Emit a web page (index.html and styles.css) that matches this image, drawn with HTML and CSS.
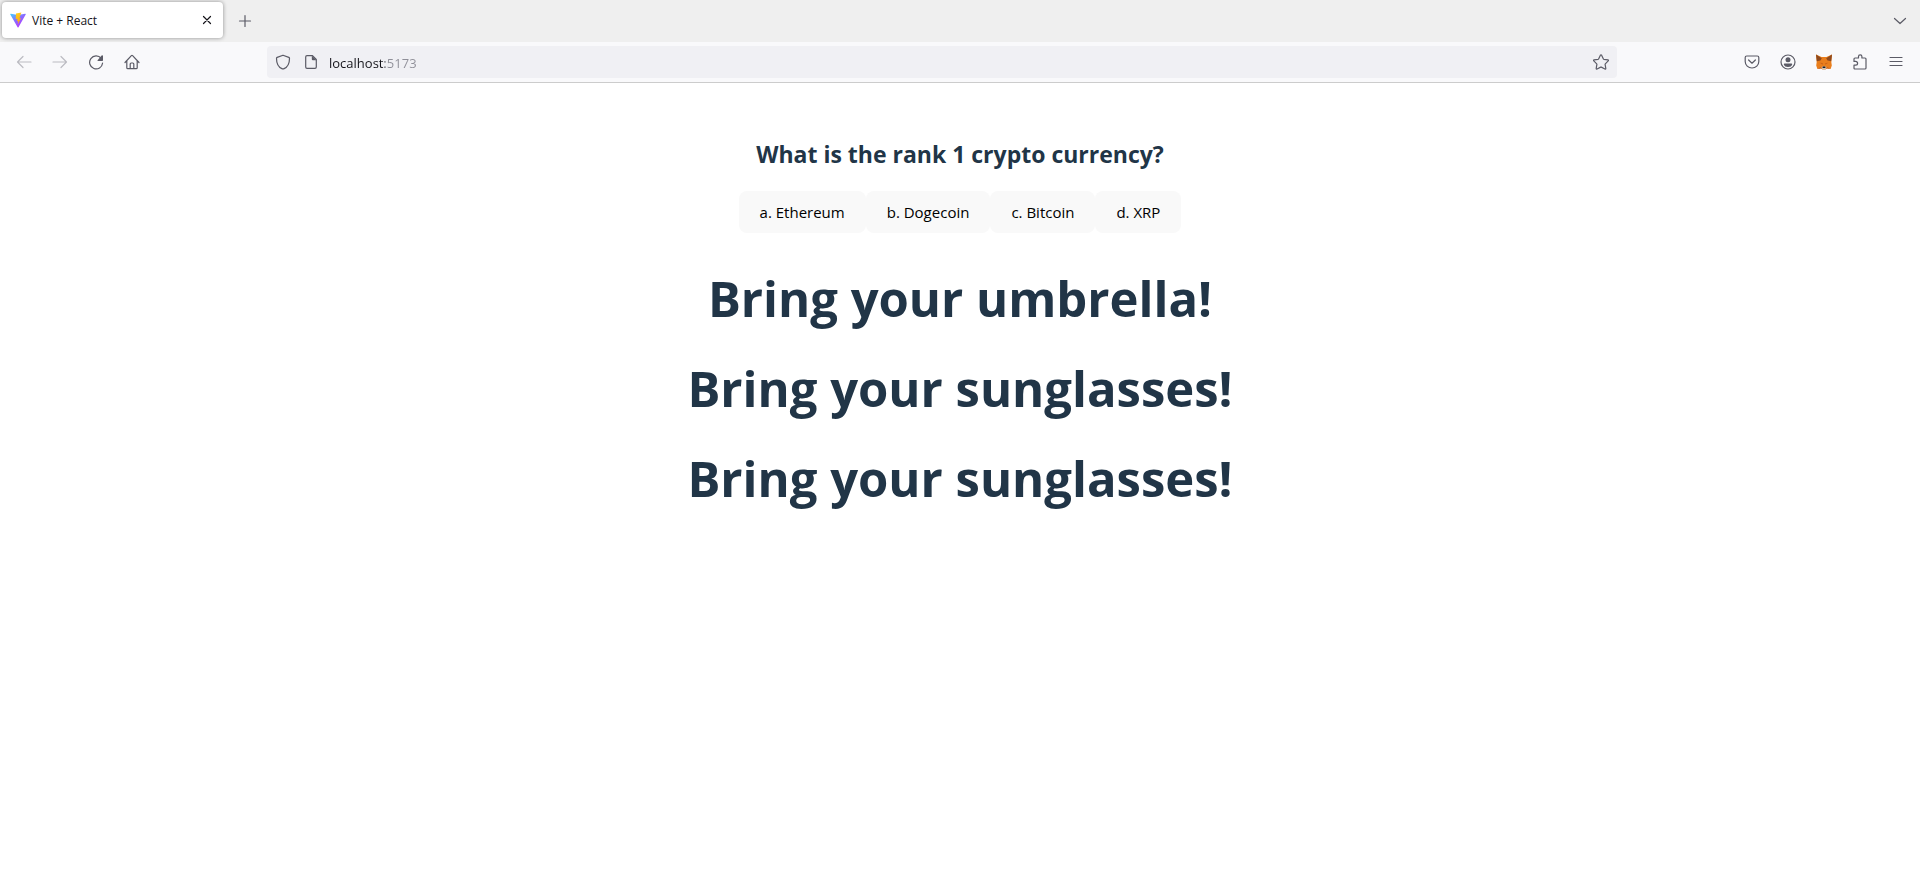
FILE: index.html
```html
<!DOCTYPE html>
<html lang="en">
<head>
<meta charset="utf-8">
<meta name="viewport" content="width=device-width, initial-scale=1">
<title>Vite + React</title>
<link rel="stylesheet" href="styles.css">
</head>
<body>
<header class="chrome">
  <div class="tabbar">
    <div class="tab">
      <svg class="favicon" viewBox="0 0 32 32" aria-hidden="true">
        <defs>
          <linearGradient id="tri" x1="0" y1="0" x2=".7" y2="1"><stop offset="0" stop-color="#41d1ff"/><stop offset=".5" stop-color="#8a6bff"/><stop offset="1" stop-color="#bd34fe"/></linearGradient>
          <linearGradient id="bolt" x1=".4" y1="0" x2=".6" y2="1"><stop offset="0" stop-color="#ffcf25"/><stop offset="1" stop-color="#ffa800"/></linearGradient>
        </defs>
        <path fill="url(#tri)" d="M31.4 5 17 30.6a1 1 0 0 1-1.8 0L.6 5a1 1 0 0 1 1.1-1.5L16 6l14.300-2.500A1 1 0 0 1 31.400 5z"/>
        <path fill="url(#bolt)" d="M22.700 1 12 3.100l-.6 11.200 3.600-.8-.9 5.200 2.500-.8-1 6.500 6.500-12-3.400.6z"/>
      </svg>
      <span class="tab-title">Vite + React</span>
      <button class="tab-close" aria-label="Close tab"><svg viewBox="0 0 16 16"><path d="m4.500 4.500 7 7M11.500 4.500l-7 7"/></svg></button>
    </div>
    <button class="tool" aria-label="New tab"><svg viewBox="0 0 16 16"><path d="M8 2.500v11M2.500 8h11"/></svg></button>
    <button class="tool all-tabs" aria-label="List all tabs"><svg viewBox="0 0 16 16"><path d="m2.500 5.500 5.500 5 5.500-5"/></svg></button>
  </div>
  <nav class="toolbar">
    <button class="tool" aria-label="Back" disabled><svg viewBox="0 0 16 16"><path d="M15 8H1.500M7 2.500 1.500 8 7 13.500"/></svg></button>
    <button class="tool" aria-label="Forward" disabled><svg viewBox="0 0 16 16"><path d="M1 8h13.500M9 2.500 14.500 8 9 13.500"/></svg></button>
    <button class="tool" aria-label="Reload"><svg viewBox="0 0 16 16"><path d="M13.200 4.300A6.500 6.500 0 1 0 14.600 9"/><path class="solid" d="M14.200 1.200q.8 0 .8.800v4.200q0 .8-.8.800H10q-1 0-.4-.8l4-4.600z"/></svg></button>
    <button class="tool" aria-label="Home"><svg viewBox="0 0 16 16"><path d="M1 8.500 7.400 1.700q.6-.6 1.200 0L15 8.500M2.800 7v6.700q0 1 1 1h8.400q1 0 1-1V7M6.200 14.500V10q0-1 1-1h1.600q1 0 1 1v4.500"/></svg></button>
    <span class="spring"></span>
    <div class="urlbar">
      <svg class="url-icon" viewBox="0 0 16 16" aria-hidden="true"><path d="M8 1.200 13.800 3.400q.7.300.7 1c0 5-1.500 8.300-5.400 10.200q-1.100.6-2.200 0C3 12.700 1.500 9.400 1.500 4.400q0-.7.700-1z"/></svg>
      <svg class="url-icon" viewBox="0 0 16 16" aria-hidden="true"><path d="M9.500 1.700H4q-1.300 0-1.300 1.300v10q0 1.300 1.300 1.300h8q1.300 0 1.300-1.300V5.500z"/><path class="solid" d="M8.800 1.500 13.500 6.200H9.800q-1 0-1-1z"/></svg>
      <input class="url" type="text" aria-label="Address" value="localhost:5173">
      <button class="star" aria-label="Bookmark this page"><svg viewBox="0 0 16 16"><path d="M7.400 1.200q.6-.9 1.200 0l1.800 3.700q.1.300.5.400l4 .6q1 .2.300 1l-2.900 2.900q-.2.200-.2.500l.7 4.100q0 1-.9.600l-3.600-1.900q-.3-.1-.6 0L4.100 15q-.9.400-.9-.6l.7-4.100q0-.3-.2-.500L.8 6.900q-.7-.8.3-1l4-.6q.4-.1.500-.4z"/></svg></button>
    </div>
    <span class="spring"></span>
    <button class="tool" aria-label="Save to Pocket"><svg viewBox="0 0 16 16"><path d="M2.700 2h10.600q1.500 0 1.500 1.500v4a6.800 6.500 0 0 1-13.600 0v-4Q1.200 2 2.700 2z"/><path d="m4.600 6 3.400 3.200L11.400 6"/></svg></button>
    <button class="tool" aria-label="Account"><svg viewBox="0 0 16 16"><circle cx="8" cy="8" r="7"/><circle class="solid" cx="8" cy="5.800" r="2.500"/><path class="solid" d="M4.600 9.500h6.800q1 0 .8.900a4.300 3.200 0 0 1-8.400 0q-.2-.9.800-.9z"/></svg></button>
    <button class="tool" aria-label="MetaMask"><svg class="fox" viewBox="0 0 16 16"><path fill="#e97e1c" d="M0 .5 5.500 3h5L16 .5l-.7 7.500.5 3.500-1.200 3.500-3.500-1L9.500 15.500h-3L4.900 14l-3.500 1-1.200-3.500L.7 8z"/><path fill="#8f4a1e" d="M0 .5 5.800 4.300 4.500 6.500.8 7.200zM16 .5l-5.800 3.800 1.300 2.200 3.700.7z"/><path fill="#c8611a" d="m3.600 8.800 3 .3.300 1.600zM12.400 8.800l-3 .3-.3 1.600zM1.400 15l3.300-2 1.500 1.500zM14.600 15l-3.300-2-1.500 1.500z"/><path fill="#cfc3b8" d="m5.500 13 1.300-.5h2.400l1.300.5-1 2.500h-3z"/><path fill="#17202a" d="M6.800 12.500h2.400l.3 1.600h-3z"/></svg></button>
    <button class="tool" aria-label="Extensions"><svg viewBox="0 0 16 16"><path d="M2 7V5q0-1 1-1h3.500V2.500a1.700 1.700 0 0 1 3.400 0V4H13q1 0 1 1v9q0 1-1 1H3q-1 0-1-1v-2.800h1.700a1.900 1.900 0 0 0 0-3.800H2z"/></svg></button>
    <button class="tool" aria-label="Menu"><svg viewBox="0 0 16 16"><path d="M2 3.500h12M2 7.500h12M2 11.500h12"/></svg></button>
  </nav>
</header>
<main class="page">
  <h2 class="question">What is the rank 1 crypto currency?</h2>
  <div class="answers">
    <button class="answer">a. Ethereum</button>
    <button class="answer">b. Dogecoin</button>
    <button class="answer">c. Bitcoin</button>
    <button class="answer">d. XRP</button>
  </div>
  <h1 class="advice">Bring your umbrella!</h1>
  <h1 class="advice">Bring your sunglasses!</h1>
  <h1 class="advice">Bring your sunglasses!</h1>
</main>
</body>
</html>
```
FILE: styles.css
```css
* { box-sizing: border-box; }

body {
  margin: 0;
  background: #fff;
  color: #213547;
  font-family: "Open Sans", "Noto Sans", sans-serif;
}

button {
  border: 0;
  padding: 0;
  background: none;
  font: inherit;
  color: inherit;
}

.chrome {
  color: #5b5b66;
  border-bottom: 1px solid #ccc;
}

.chrome svg {
  display: block;
  width: 16px;
  height: 16px;
  fill: none;
  stroke: currentColor;
  stroke-width: 1.2;
  stroke-linecap: round;
  stroke-linejoin: round;
}

.chrome .solid { fill: currentColor; stroke: none; }
.chrome .favicon, .chrome .fox { stroke: none; }

.tabbar {
  display: flex;
  align-items: center;
  height: 42px;
  padding: 0 2px;
  background: #efefef;
}

.tab {
  display: flex;
  align-items: center;
  gap: 6px;
  width: 221px;
  height: 36px;
  margin-bottom: 2px;
  padding: 0 8px;
  border-radius: 4px;
  background: #fff;
  box-shadow: 0 0 4px rgba(0, 0, 0, 0.4);
}

.tab-title {
  flex: 1;
  font-size: 12px;
  color: #15141a;
}

.tab-close { color: #15141a; }

.tool {
  display: flex;
  align-items: center;
  justify-content: center;
  width: 36px;
  height: 36px;
}

.tab + .tool { margin-left: 4px; }
.tool:disabled { color: #bcbcc2; }
.all-tabs { margin-left: auto; }

.toolbar {
  display: flex;
  align-items: center;
  height: 40px;
  padding: 0 6px;
  background: #f9f9fb;
}

.spring { flex: 0 1 117px; }

.urlbar {
  display: flex;
  flex: 1;
  align-items: center;
  gap: 12px;
  height: 32px;
  padding: 0 8px;
  border-radius: 4px;
  background: #f0f0f4;
}

.url {
  flex: 1;
  min-width: 0;
  margin-left: -2px;
  border: 0;
  padding: 2px 0 0;
  font: 13px "Open Sans", "Noto Sans", sans-serif;
  color: #15141a;
  background: linear-gradient(90deg, #15141a 56px, #8f8f98 56px);
  background-clip: text;
  -webkit-background-clip: text;
  -webkit-text-fill-color: transparent;
}

.page {
  display: flex;
  flex-direction: column;
  align-items: center;
  padding: 34px 32px;
  text-align: center;
}

.question {
  margin: 19px 0;
  font-size: 23px;
  font-weight: 700;
  line-height: 36px;
}

.answers {
  display: flex;
  margin-bottom: 3px;
}

.answer {
  padding: 9px 21px;
  border-radius: 8px;
  background: #f9f9f9;
  color: #000;
  font-size: 15px;
  line-height: 24px;
}

.advice {
  margin: 34px 0 0;
  font-size: 49px;
  font-weight: 700;
  line-height: 56px;
}
```
